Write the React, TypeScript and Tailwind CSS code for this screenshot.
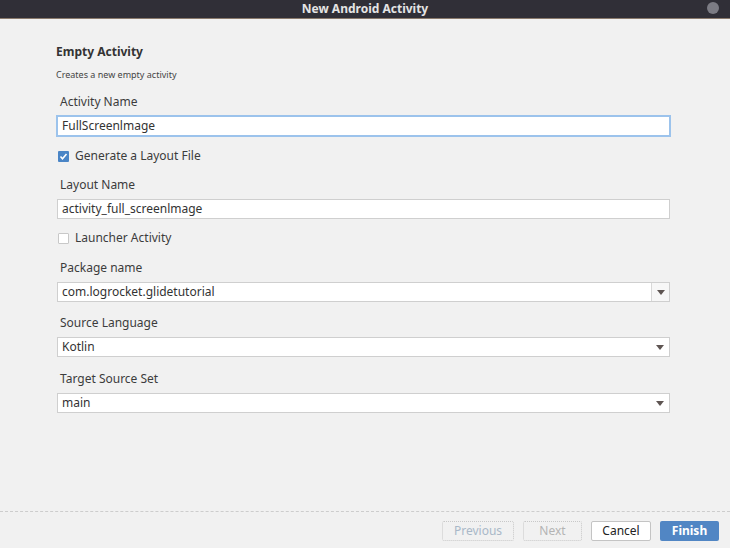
const font = { fontFamily: '"Noto Sans", "Open Sans", sans-serif' };

function Label({ text, className = '' }: { text: string; className?: string }) {
    return <div className={`pl-[3px] text-[12px] leading-[16px] text-[#3c3c3c] ${className}`}>{text}</div>;
}

function TextField({ value, focused = false, className = '' }: { value: string; focused?: boolean; className?: string }) {
    return (
        <div
            className={`flex items-center bg-white text-[12px] text-[#333] ${
                focused
                    ? 'h-[22px] ml-[-1px] mr-[-1px] border-2 border-[#9cc3ec] pl-[4px]'
                    : 'h-[20px] border border-[#cfcfcf] pl-[4px]'
            } ${className}`}
        >
            {value}
        </div>
    );
}

function Arrow() {
    return (
        <svg width="8" height="5" viewBox="0 0 8 5">
            <path d="M0 0h8L4 5z" fill="#5e5552" />
        </svg>
    );
}

function Combo({ value, split = false, className = '' }: { value: string; split?: boolean; className?: string }) {
    return (
        <div className={`flex items-stretch h-[20px] bg-white border border-[#cfcfcf] text-[12px] text-[#333] ${className}`}>
            <div className="flex-1 flex items-center pl-[4px]">{value}</div>
            <div className={`w-[18px] flex items-center justify-center ${split ? 'border-l border-[#d8d8d8] bg-[#f7f7f7]' : ''}`}>
                <Arrow />
            </div>
        </div>
    );
}

function Check({ checked, label, className = '' }: { checked: boolean; label: string; className?: string }) {
    return (
        <div className={`flex items-center h-[16px] pl-[1px] ${className}`}>
            {checked ? (
                <svg width="11" height="11" viewBox="0 0 11 11">
                    <rect width="11" height="11" rx="1" fill="#4a85c6" />
                    <path d="M2.5 5.5l2 2.2 4-4.6" stroke="#fff" strokeWidth="1.6" fill="none" />
                </svg>
            ) : (
                <div className="w-[11px] h-[11px] bg-white border border-[#c8c8c8] rounded-[1px]" />
            )}
            <span className="ml-[6px] text-[12px] text-[#3c3c3c]">{label}</span>
        </div>
    );
}

export default function App() {
    return (
        <div className="w-[730px] h-[548px] flex flex-col bg-[#f1f1f1] overflow-hidden" style={font}>
            <div className="h-[19px] shrink-0 flex items-center justify-center relative bg-[#302f37] border-b border-[#8a7a6c]">
                <span className="text-[12px] font-bold text-[#e4e4e4] leading-none">New Android Activity</span>
                <div className="absolute right-[11px] top-[2px] w-[12px] h-[12px] rounded-full bg-[#7c7c84]" />
            </div>

            <div className="flex-1 pl-[57px] pr-[60px]">
                <div className="mt-[25px] ml-[-1px] text-[12px] leading-[16px] font-bold text-[#333]">Empty Activity</div>
                <div className="mt-[9px] ml-[-1px] text-[9px] leading-[12px] text-[#444]">Creates a new empty activity</div>

                <Label text="Activity Name" className="mt-[13px]" />
                <TextField value="FullScreenlmage" focused className="mt-[5px]" />

                <Check checked label="Generate a Layout File" className="mt-[11px]" />

                <Label text="Layout Name" className="mt-[13px]" />
                <TextField value="activity_full_screenlmage" className="mt-[6px]" />

                <Check checked={false} label="Launcher Activity" className="mt-[11px]" />

                <Label text="Package name" className="mt-[14px]" />
                <Combo value="com.logrocket.glidetutorial" split className="mt-[6px]" />

                <Label text="Source Language" className="mt-[13px]" />
                <Combo value="Kotlin" className="mt-[6px]" />

                <Label text="Target Source Set" className="mt-[14px]" />
                <Combo value="main" className="mt-[6px]" />
            </div>

            <div className="shrink-0 border-t border-dashed border-[#cdcdcd] h-[37px] flex items-start justify-end pt-[9px] pr-[11px] gap-[9px]">
                <button className="w-[72px] h-[20px] border border-dotted border-[#c8c8c8] rounded-[2px] text-[12px] text-[#a9b8c8]">Previous</button>
                <button className="w-[59px] h-[20px] border border-dotted border-[#c8c8c8] rounded-[2px] text-[12px] text-[#b4b4b4]">Next</button>
                <button className="w-[60px] h-[20px] bg-white border border-[#c4c4c4] rounded-[2px] text-[12px] text-[#222]">Cancel</button>
                <button className="w-[59px] h-[20px] bg-[#5186c4] rounded-[2px] text-[12px] font-bold text-white">Finish</button>
            </div>
        </div>
    );
}
